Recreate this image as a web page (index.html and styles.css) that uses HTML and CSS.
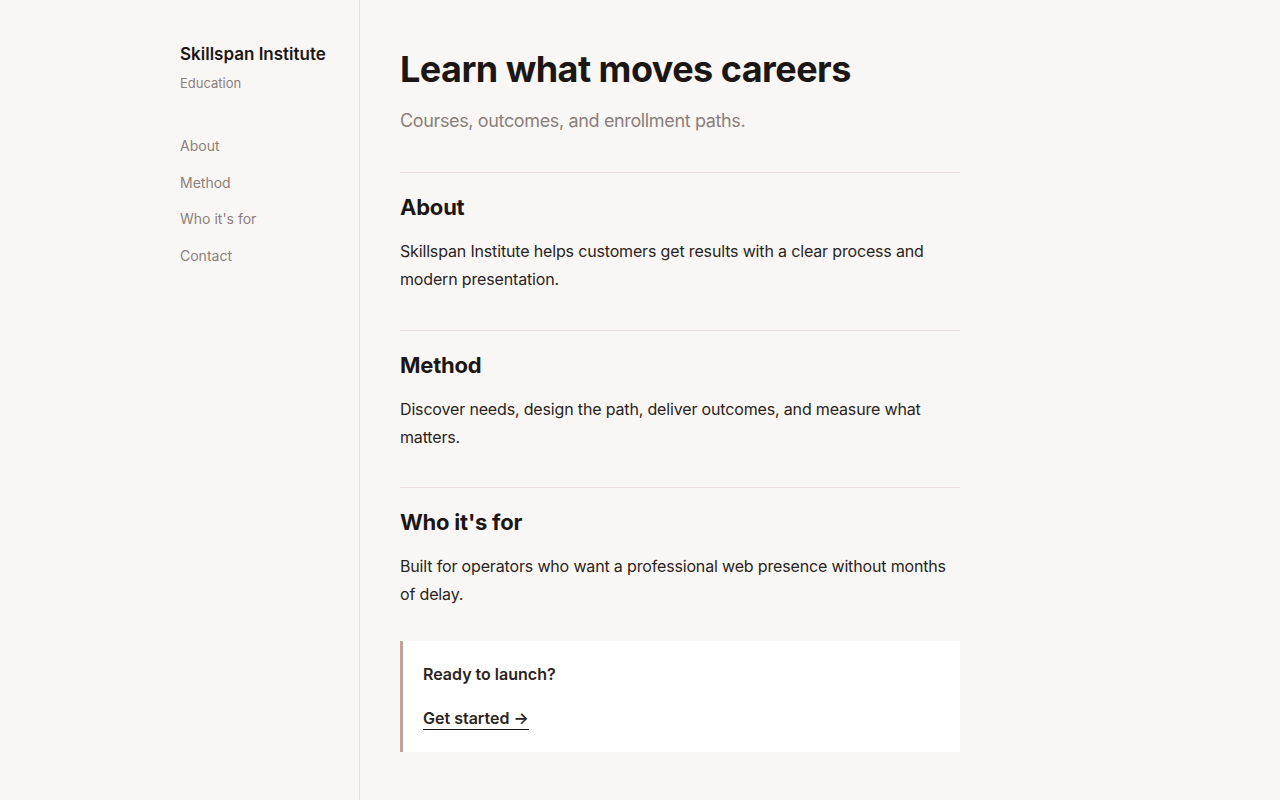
FILE: index.html
```html
<!DOCTYPE html>
<html lang="en">
<head>
  <meta charset="UTF-8">
  <meta name="viewport" content="width=device-width, initial-scale=1.0">
  <title>Skillspan Institute</title>
  <link rel="stylesheet" href="styles.css">
</head>
<body>
  <div class="layout">
    <aside class="sidebar">
      <div class="brand">Skillspan Institute</div>
      <div class="brand-sub">Education</div>
      <nav class="nav">
        <a href="#about">About</a>
        <a href="#method">Method</a>
        <a href="#who">Who it's for</a>
        <a href="#contact">Contact</a>
      </nav>
    </aside>

    <main class="main">
      <h1>Learn what moves careers</h1>
      <p class="lead">Courses, outcomes, and enrollment paths.</p>

      <section class="section" id="about">
        <h2>About</h2>
        <p>Skillspan Institute helps customers get results with a clear process and modern presentation.</p>
      </section>

      <section class="section" id="method">
        <h2>Method</h2>
        <p>Discover needs, design the path, deliver outcomes, and measure what matters.</p>
      </section>

      <section class="section" id="who">
        <h2>Who it's for</h2>
        <p>Built for operators who want a professional web presence without months of delay.</p>
      </section>

      <div class="cta" id="contact">
        <p class="cta-title">Ready to launch?</p>
        <a class="cta-link" href="#">Get started →</a>
      </div>
    </main>
  </div>
</body>
</html>
```

FILE: styles.css
```css
body {
  margin: 0;
  background: #f9f7f6;
  color: #1c1714;
  font-family: Inter, "Liberation Sans", sans-serif;
}
.layout {
  display: flex;
  min-height: 100vh;
}
.sidebar {
  width: 360px;
  box-sizing: border-box;
  padding: 42px 20px 0 180px;
  border-right: 1px solid #e7e1de;
  flex-shrink: 0;
}
.brand {
  font-size: 17px;
  font-weight: 600;
  line-height: 24px;
}
.brand-sub {
  margin-top: 7px;
  font-size: 13px;
  line-height: 20px;
  color: #8a7f7a;
}
.nav {
  margin-top: 35px;
  display: flex;
  flex-direction: column;
}
.nav a {
  padding: 8px 0;
  font-size: 14px;
  line-height: 20.67px;
  color: #8a7f7a;
  text-decoration: none;
}
.main {
  width: 560px;
  padding: 47px 40px;
}
h1 {
  margin: 0;
  font-size: 36px;
  line-height: 44px;
  font-weight: 700;
  letter-spacing: -0.015em;
}
.lead {
  margin: 16px 0 37px;
  font-size: 18px;
  line-height: 28px;
  color: #8a7f7a;
  letter-spacing: -0.02em;
}
.section {
  border-top: 1px solid #ebe0dd;
  padding: 19px 0 36.5px;
}
.section:last-of-type {
  padding-bottom: 33px;
}
h2 {
  margin: 0;
  font-size: 22px;
  line-height: 30px;
  font-weight: 700;
  letter-spacing: -0.01em;
}
.section p {
  margin: 15px 0 0;
  font-size: 16px;
  line-height: 28px;
  color: #2a2320;
  letter-spacing: -0.01em;
}
.cta {
  background: #ffffff;
  border-left: 3px solid #c4a296;
  padding: 21px 20px 22px;
}
.cta-title {
  margin: 0 0 21px;
  font-size: 16px;
  line-height: 24px;
  font-weight: 600;
  color: #2a2320;
}
.cta-link {
  display: inline-block;
  font-size: 16px;
  line-height: 22px;
  font-weight: 600;
  color: #2a2320;
  text-decoration: none;
  border-bottom: 1.5px solid #1c1714;
}
```
